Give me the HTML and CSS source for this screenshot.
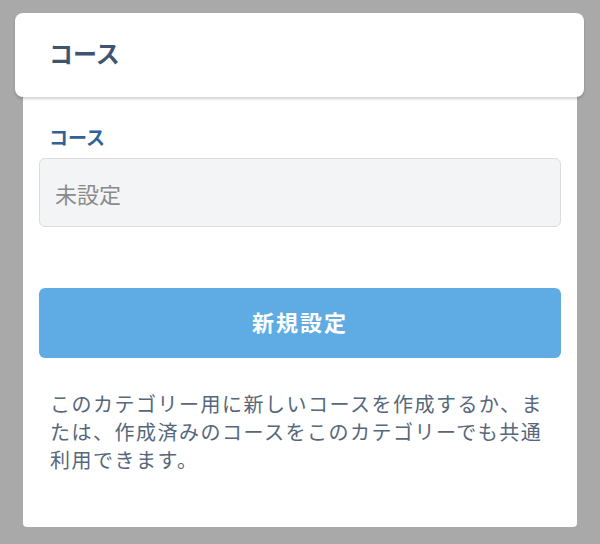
FILE: index.html
```html
<!DOCTYPE html>
<html lang="ja">
<head>
  <meta charset="UTF-8" />
  <meta name="viewport" content="width=device-width, initial-scale=1.0"/>
  <title>コース</title>
  <link rel="stylesheet" href="styles.css">
</head>
<body>
  <div class="sheet">
    <!-- ヘッダー -->
    <div class="sheet-header">
      <h2>コース</h2>
    </div>

    <div class="sheet-body">
      <label for="course">コース</label>
      <input type="text" id="course" placeholder="未設定" readonly>

      <button class="btn-new">新規設定</button>

      <p class="note">このカテゴリー用に新しいコースを作成するか、または、作成済みのコースをこのカテゴリーでも共通利用できます。</p>
    </div>
  </div>
</body>
</html>
```

FILE: styles.css
```css
body {
  font-family: "Noto Sans CJK JP", "Noto Sans", sans-serif;
  background: #a9a9a9;
  margin: 0;
  padding: 13px 16px 0 15px;
}

.sheet {
  display: flex;
  flex-direction: column;
}

.sheet-header {
  background-color: #ffffff;
  border-radius: 8px;
  height: 84px;
  padding: 0 34px;
  display: flex;
  align-items: center;
  box-shadow: 0 2px 3px rgba(0,0,0,0.18);
  position: relative;
  z-index: 1;
}

h2 {
  margin: 0;
  font-size: 24px;
  font-weight: bold;
  color: #3e556f;
  line-height: 1;
  padding-bottom: 4px;
}

.sheet-body {
  background-color: #ffffff;
  margin: 0 7px 0 8px;
  padding: 26px 16px 53px;
  border-radius: 0 0 4px 4px;
}

label {
  display: block;
  font-size: 19px;
  font-weight: bold;
  color: #2f6299;
  line-height: 27px;
  padding-left: 10px;
  margin-bottom: 8px;
}

input {
  display: block;
  width: 100%;
  box-sizing: border-box;
  height: 69px;
  padding: 0 15px;
  border: 1px solid #dcdcdc;
  border-radius: 6px;
  background-color: #f3f4f6;
  font-family: inherit;
  font-size: 22px;
  color: #333;
  outline: none;
}

input::placeholder {
  color: #8a8a8a;
}

.btn-new {
  display: block;
  width: 100%;
  height: 70px;
  margin-top: 61px;
  padding: 0 0 5px;
  border: none;
  border-radius: 6px;
  background-color: #5eace3;
  color: #ffffff;
  font-family: inherit;
  font-size: 22px;
  font-weight: bold;
  letter-spacing: 2px;
  cursor: pointer;
}

.note {
  margin: 32px 0 0;
  padding: 0 8px 0 11px;
  font-size: 20px;
  letter-spacing: 1.5px;
  line-height: 28px;
  color: #56677c;
}
```
